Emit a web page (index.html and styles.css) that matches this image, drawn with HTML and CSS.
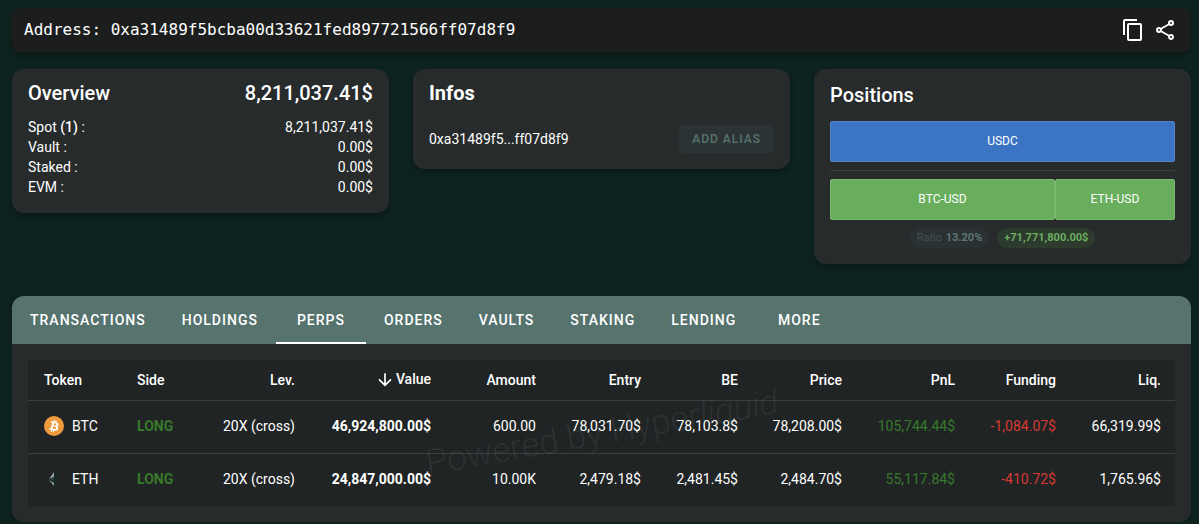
FILE: index.html
```html
<!DOCTYPE html>
<html lang="en">
<head>
    <meta charset="UTF-8">
    <meta name="viewport" content="width=device-width, initial-scale=1.0">
    <title>Address overview</title>
    <link rel="stylesheet" href="styles.css">
</head>
<body>
    <header class="address-bar">
        <h1 class="address">Address: 0xa31489f5bcba00d33621fed897721566ff07d8f9</h1>
        <div class="address-actions">
            <button class="icon-btn" type="button" aria-label="Copy address">
                <svg viewBox="0 0 24 24" width="24" height="24"><path d="M19,21H8V7H19M19,5H8A2,2 0 0,0 6,7V21A2,2 0 0,0 8,23H19A2,2 0 0,0 21,21V7A2,2 0 0,0 19,5M16,1H4A2,2 0 0,0 2,3V17H4V3H16V1Z"/></svg>
            </button>
            <button class="icon-btn" type="button" aria-label="Share">
                <svg viewBox="0 0 24 24" width="24" height="24"><path d="M18,16.08C17.24,16.08 16.56,16.38 16.04,16.85L8.91,12.7C8.96,12.47 9,12.24 9,12C9,11.76 8.96,11.53 8.91,11.3L15.96,7.19C16.5,7.69 17.21,8 18,8A3,3 0 0,0 21,5A3,3 0 0,0 18,2A3,3 0 0,0 15,5C15,5.24 15.04,5.47 15.09,5.7L8.04,9.81C7.5,9.31 6.79,9 6,9A3,3 0 0,0 3,12A3,3 0 0,0 6,15C6.79,15 7.5,14.69 8.04,14.19L15.16,18.34C15.11,18.55 15.08,18.77 15.08,19C15.08,20.61 16.39,21.91 18,21.91C19.61,21.91 20.92,20.61 20.92,19A2.92,2.92 0 0,0 18,16.08M18,4A1,1 0 0,1 19,5A1,1 0 0,1 18,6A1,1 0 0,1 17,5A1,1 0 0,1 18,4M6,13A1,1 0 0,1 5,12A1,1 0 0,1 6,11A1,1 0 0,1 7,12A1,1 0 0,1 6,13M18,20A1,1 0 0,1 17,19A1,1 0 0,1 18,18A1,1 0 0,1 19,19A1,1 0 0,1 18,20Z"/></svg>
            </button>
        </div>
    </header>

    <main>
        <div class="cards">
            <section class="card">
                <div class="card-title">
                    <h2>Overview</h2>
                    <span>8,211,037.41$</span>
                </div>
                <dl class="balances">
                    <div><dt>Spot <b>(1)</b> :</dt><dd>8,211,037.41$</dd></div>
                    <div><dt>Vault :</dt><dd>0.00$</dd></div>
                    <div><dt>Staked :</dt><dd>0.00$</dd></div>
                    <div><dt>EVM :</dt><dd>0.00$</dd></div>
                </dl>
            </section>

            <section class="card">
                <div class="card-title infos-title"><h2>Infos</h2></div>
                <div class="alias">
                    <span>0xa31489f5...ff07d8f9</span>
                    <button class="alias-btn" type="button">Add alias</button>
                </div>
            </section>

            <section class="card positions">
                <div class="card-title"><h2>Positions</h2></div>
                <div class="bar-row">
                    <div class="bar spot">USDC</div>
                </div>
                <hr>
                <div class="bar-row">
                    <div class="bar long" style="flex-grow: 46924800">BTC-USD</div>
                    <div class="bar long" style="flex-grow: 24847000">ETH-USD</div>
                </div>
                <div class="chips">
                    <span class="chip">Ratio <b>13.20%</b></span>
                    <span class="chip chip-long"><b>+71,771,800.00$</b></span>
                </div>
            </section>
        </div>

        <section class="panel">
            <nav class="tabs">
                <a href="#transactions">Transactions</a>
                <a href="#holdings">Holdings</a>
                <a href="#perps" class="active" aria-current="page">Perps</a>
                <a href="#orders">Orders</a>
                <a href="#vaults">Vaults</a>
                <a href="#staking">Staking</a>
                <a href="#lending">Lending</a>
                <a href="#more">More</a>
            </nav>
            <div class="panel-body">
                <table class="perps">
                    <colgroup>
                        <col class="c-token"><col class="c-side"><col class="c-lev"><col class="c-value"><col class="c-amount"><col class="c-entry"><col class="c-be"><col class="c-price"><col class="c-pnl"><col class="c-funding"><col class="c-liq">
                    </colgroup>
                    <thead>
                        <tr>
                            <th>Token</th>
                            <th>Side</th>
                            <th class="num">Lev.</th>
                            <th class="num" aria-sort="descending"><svg class="sort" viewBox="0 0 24 24" width="20" height="20"><path d="M11,4H13V16L18.5,10.5L19.92,11.92L12,19.84L4.08,11.92L5.5,10.5L11,16V4Z"/></svg>Value</th>
                            <th class="num">Amount</th>
                            <th class="num">Entry</th>
                            <th class="num">BE</th>
                            <th class="num">Price</th>
                            <th class="num">PnL</th>
                            <th class="num">Funding</th>
                            <th class="num">Liq.</th>
                        </tr>
                    </thead>
                    <tbody>
                        <tr>
                            <td>
                                <div class="token">
                                    <svg viewBox="0 0 32 32" width="20" height="20">
                                        <circle cx="16" cy="16" r="16" fill="#f09a3e"/>
                                        <path fill="#fff" d="M23.2 14c.3-2.1-1.3-3.2-3.5-4l.7-2.9-1.7-.4-.7 2.8-1.4-.3.7-2.8-1.7-.4-.7 2.9-1.1-.3-2.4-.6-.5 1.9s1.3.3 1.3.3c.7.2.8.6.8 1l-.8 3.3-1.2 4.6c-.1.2-.3.5-.8.4l-1.3-.3-.9 2 3.4.9-.7 2.9 1.7.4.7-2.9 1.4.4-.7 2.8 1.7.4.7-2.9c3 .6 5.200.3 6.100-2.300.8-2.100 0-3.400-1.500-4.200 1.100-.2 2-1 2.400-2.700zm-3.900 5.500c-.5 2.200-4.100 1-5.300.7l.9-3.800c1.200.3 4.900.9 4.400 3.100zm.6-5.500c-.5 2-3.500 1-4.500.7l.9-3.400c1 .3 4.100.7 3.600 2.700z"/>
                                    </svg>
                                    BTC
                                </div>
                            </td>
                            <td class="side">LONG</td>
                            <td class="num">20X (cross)</td>
                            <td class="num value">46,924,800.00$</td>
                            <td class="num">600.00</td>
                            <td class="num">78,031.70$</td>
                            <td class="num">78,103.8$</td>
                            <td class="num">78,208.00$</td>
                            <td class="num gain">105,744.44$</td>
                            <td class="num loss">-1,084.07$</td>
                            <td class="num">66,319.99$</td>
                        </tr>
                        <tr>
                            <td>
                                <div class="token">
                                    <svg viewBox="0 0 20 20" width="20" height="20">
                                        <path fill="#8fa3a0" d="M10 3v5L5 10z"/>
                                        <path fill="#33423f" d="M10 8v4l-5-2z"/>
                                        <path fill="#8fa3a0" d="M5 11l5 3v3z"/>
                                        <path fill="#172a26" d="M10 3l5 7-5 7z"/>
                                    </svg>
                                    ETH
                                </div>
                            </td>
                            <td class="side">LONG</td>
                            <td class="num">20X (cross)</td>
                            <td class="num value">24,847,000.00$</td>
                            <td class="num">10.00K</td>
                            <td class="num">2,479.18$</td>
                            <td class="num">2,481.45$</td>
                            <td class="num">2,484.70$</td>
                            <td class="num gain">55,117.84$</td>
                            <td class="num loss">-410.72$</td>
                            <td class="num">1,765.96$</td>
                        </tr>
                    </tbody>
                </table>
                <div class="watermark">Powered by Hyper<em>liquid</em></div>
            </div>
        </section>
    </main>
</body>
</html>
```
FILE: styles.css
```css
* { margin: 0; padding: 0; box-sizing: border-box; }
:root {
    --bg: #0d2320; --bar: #1c1e1e; --card: #272b2c; --table: #202424;
    --teal: #56736e; --line: #3a3f40; --text: #ffffff;
    --green: #37792b; --red: #d83a32;
}
body { background: var(--bg); color: var(--text); font-family: Roboto, sans-serif; font-size: 14px; line-height: 20px; padding: 8px 8px 0 12px; }
button { font: inherit; border: none; cursor: pointer; }
svg { fill: currentColor; }

.address-bar { display: flex; align-items: center; justify-content: space-between; height: 44px; padding: 0 14px 0 12px; background: var(--bar); border-radius: 8px; box-shadow: 0 3px 6px rgba(0, 0, 0, 0.3); }
.address { font-family: "DejaVu Sans Mono", monospace; font-size: 16px; font-weight: 400; }
.address-actions { display: flex; gap: 8px; }
.icon-btn { display: flex; background: none; color: var(--text); }

.cards { display: grid; grid-template-columns: repeat(3, 1fr); align-items: start; gap: 24px; margin-top: 17px; }
.card { padding: 12px 16px 16px; background: var(--card); border-radius: 12px; box-shadow: 0 3px 6px rgba(0, 0, 0, 0.3); }
.card-title { display: flex; justify-content: space-between; font-size: 20px; font-weight: 500; line-height: 24px; }
.card-title h2 { font-size: 20px; font-weight: 500; }
.card-title.infos-title h2 { font-weight: 700; }
.balances { margin-top: 12px; }
.balances div { display: flex; justify-content: space-between; }
.balances b { font-weight: 500; }
.alias { display: flex; align-items: center; justify-content: space-between; margin-top: 20px; }
.alias-btn { height: 28px; padding: 0 13px; background: #2c3334; border-radius: 4px; color: #56736e; font-size: 12px; font-weight: 500; letter-spacing: 1px; text-transform: uppercase; }

.positions { padding-top: 14px; }
.bar-row { display: flex; margin-top: 14px; }
.bar { flex: 1 1 0; height: 41px; border: 1px solid; border-radius: 2px; font-size: 12px; line-height: 39px; text-align: center; }
.spot { background: #3c74c4; border-color: #5584c8; }
.long { background: #69ae5d; border-color: #7bb971; }
.positions hr { height: 1px; margin-top: 8px; border: none; background: var(--line); }
.positions hr + .bar-row { margin-top: 8px; }
.chips { display: flex; justify-content: center; gap: 8px; margin-top: 8px; }
.chip { padding: 0 7px; background: #2a3132; border-radius: 10px; color: #42524f; font-size: 11px; line-height: 20px; }
.chip b { margin-left: 1px; color: #5f7672; }
.chip-long { background: #2d3a2e; }
.chip-long b { margin-left: 0; color: #69ae5d; }

.panel { margin-top: 32px; background: var(--card); border-radius: 12px; box-shadow: 0 3px 6px rgba(0, 0, 0, 0.3); overflow: hidden; }
.tabs { display: flex; height: 48px; background: var(--teal); }
.tabs a { min-width: 90px; padding: 0 18px; border-bottom: 2px solid transparent; color: var(--text); font-weight: 500; letter-spacing: 1px; line-height: 48px; text-align: center; text-decoration: none; text-transform: uppercase; }
.tabs a.active { border-color: var(--text); }
.panel-body { position: relative; padding: 16px; }

.perps { width: 100%; table-layout: fixed; border-collapse: collapse; background: var(--table); }
.perps th, .perps td { padding: 0 14px 0 16px; text-align: left; white-space: nowrap; }
.perps th { height: 40px; font-weight: 500; }
.perps td { height: 53px; padding-bottom: 2px; border-top: 1px solid var(--line); }
.perps .num { padding-left: 0; text-align: right; }
.c-token { width: 93px; }
.c-side { width: 82px; }
.c-lev { width: 106px; }
.c-value { width: 136px; }
.c-amount, .c-entry, .c-liq { width: 105px; }
.c-be { width: 97px; }
.c-price { width: 104px; }
.c-pnl { width: 113px; }
.c-funding { width: 101px; }
.sort { margin-right: 1px; vertical-align: middle; }
.token { display: flex; align-items: center; gap: 8px; }
.side { color: var(--green); font-weight: 700; }
.value { font-weight: 700; }
.gain { color: var(--green); }
.loss { color: var(--red); }
.watermark { position: absolute; top: 50%; left: 50%; transform: translate(-50%, -50%) rotate(-10deg); color: rgba(150, 190, 180, 0.1); font-size: 35px; font-weight: 300; line-height: 40px; white-space: nowrap; pointer-events: none; }
```
